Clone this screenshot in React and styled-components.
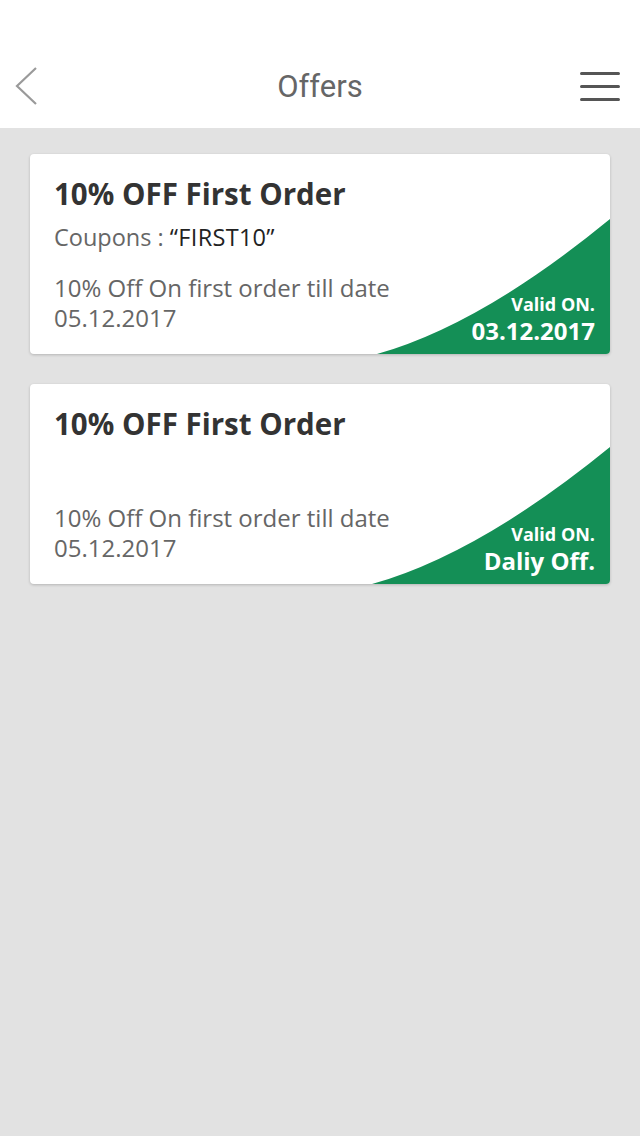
import styled, { createGlobalStyle } from 'styled-components';

const GlobalStyle = createGlobalStyle`
	html, body {
		margin: 0;
		padding: 0;
		background: #e2e2e2;
	}
	body {
		font-family: 'Open Sans', 'Liberation Sans', sans-serif;
	}
`;

const offers = [
	{ id: 1, title: '10% OFF First Order', coupon: 'FIRST10', text: '10% Off On first order till date', date: '05.12.2017', valid: '03.12.2017', w: 233, h: 135 },
	{ id: 2, title: '10% OFF First Order', coupon: null, text: '10% Off On first order till date', date: '05.12.2017', valid: 'Daliy Off.', w: 238, h: 137 },
];

const Page = styled.div`
	min-height: 1136px;
	background: #e2e2e2;
`;

const Header = styled.header`
	height: 128px;
	background: #fff;
	padding: 44px 20px 0 14px;
	box-sizing: border-box;
	display: grid;
	grid-template-columns: 1fr auto 1fr;
	align-items: center;
`;

const Title = styled.h1`
	margin: 0;
	font-family: Roboto, 'Liberation Sans', sans-serif;
	font-weight: 400;
	font-size: 31px;
	color: #666;
	padding-left: 6px;
`;

const IconButton = styled.button`
	border: 0;
	background: none;
	padding: 0;
	display: flex;
	height: 40px;
	align-items: center;
	justify-self: ${(p) => (p.right ? 'end' : 'start')};
`;

const List = styled.div`
	padding: 26px 30px;
	display: flex;
	flex-direction: column;
	gap: 30px;
`;

const Card = styled.div`
	position: relative;
	height: 200px;
	background: #fff;
	border-radius: 4px;
	box-shadow: 0 1px 3px rgba(0, 0, 0, 0.2);
	overflow: hidden;
	box-sizing: border-box;
	padding: 20px 24px 21px;
	display: flex;
	flex-direction: column;
`;

const CardTitle = styled.h2`
	margin: 0;
	font-size: 29.5px;
	line-height: 40px;
	font-weight: 700;
	color: #333;
`;

const Coupon = styled.div`
	margin-top: 8px;
	font-size: 23.5px;
	line-height: 30px;
	color: #666;

	b {
		font-weight: 500;
		color: #222;
		letter-spacing: 0.3px;
	}
`;

const Desc = styled.p`
	margin: auto 0 0;
	font-size: 24px;
	line-height: 30px;
	color: #666;
	position: relative;
	z-index: 1;
`;

const Ribbon = styled.div`
	position: absolute;
	right: 0;
	bottom: 0;
	width: ${(p) => p.width}px;
	height: ${(p) => p.height}px;
	display: flex;
	flex-direction: column;
	justify-content: flex-end;
	align-items: flex-end;
	padding: 0 15px 8px 0;
	box-sizing: border-box;
	color: #fff;
	font-weight: 700;

	svg {
		position: absolute;
		inset: 0;
		width: 100%;
		height: 100%;
	}
`;

const ValidLabel = styled.span`
	position: relative;
	font-size: 18px;
	line-height: 24px;
`;

const ValidDate = styled.span`
	position: relative;
	font-size: 24px;
	line-height: 30px;
`;

function RibbonShape() {
	return (
		<svg viewBox="0 0 100 100" preserveAspectRatio="none">
			<path d="M0 100 Q 45 78 100 0 L100 100 Z" fill="#148f56" />
		</svg>
	);
}

export default function App() {
	return (
		<>
			<GlobalStyle />
			<Page>
				<Header>
					<IconButton>
						<svg width="26" height="40" viewBox="0 0 26 40">
							<path d="M22 2 L3 20 L22 38" fill="none" stroke="#9a9a9a" strokeWidth="2.2" />
						</svg>
					</IconButton>
					<Title>Offers</Title>
					<IconButton right>
						<svg width="40" height="30" viewBox="0 0 40 30">
							<rect x="0" y="1" width="40" height="3" rx="1.5" fill="#555" />
							<rect x="0" y="14" width="40" height="3" rx="1.5" fill="#555" />
							<rect x="0" y="27" width="40" height="3" rx="1.5" fill="#555" />
						</svg>
					</IconButton>
				</Header>
				<List>
					{offers.map((o) => (
						<Card key={o.id}>
							<CardTitle>{o.title}</CardTitle>
							{o.coupon && (
								<Coupon>
									Coupons : <b>“{o.coupon}”</b>
								</Coupon>
							)}
							<Desc>
								{o.text}
								<br />
								{o.date}
							</Desc>
							<Ribbon width={o.w} height={o.h}>
								<RibbonShape />
								<ValidLabel>Valid ON.</ValidLabel>
								<ValidDate>{o.valid}</ValidDate>
							</Ribbon>
						</Card>
					))}
				</List>
			</Page>
		</>
	);
}
